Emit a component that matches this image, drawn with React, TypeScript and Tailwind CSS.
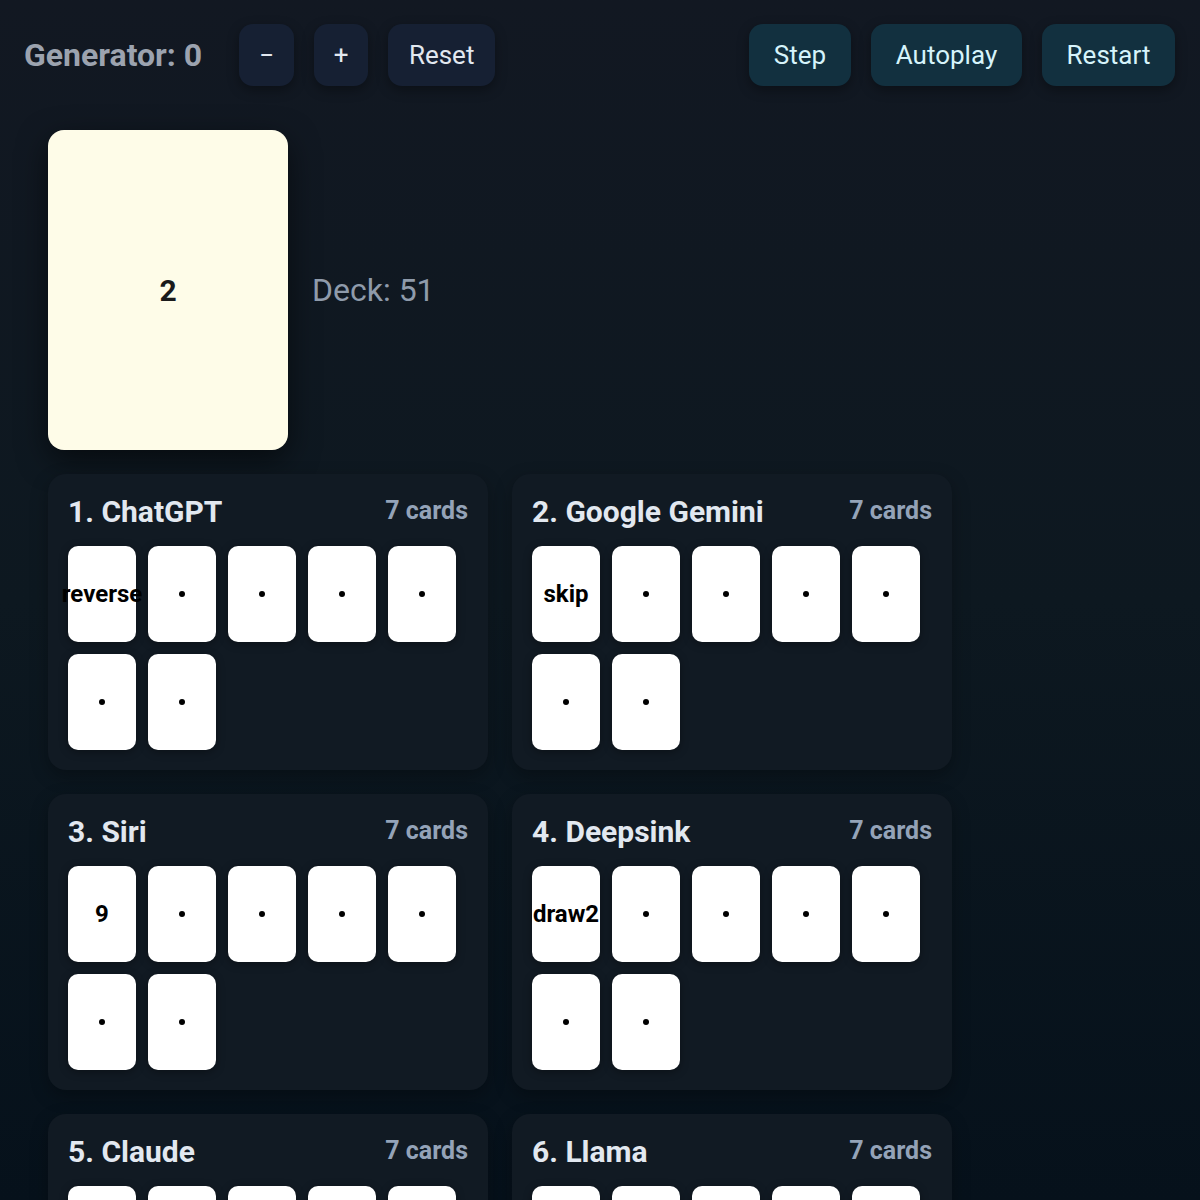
import React from 'react';

type Player = {
  name: string;
  hand: string[];
};

const players: Player[] = [
  { name: 'ChatGPT', hand: ['reverse', '•', '•', '•', '•', '•', '•'] },
  { name: 'Google Gemini', hand: ['skip', '•', '•', '•', '•', '•', '•'] },
  { name: 'Siri', hand: ['9', '•', '•', '•', '•', '•', '•'] },
  { name: 'Deepsink', hand: ['draw2', '•', '•', '•', '•', '•', '•'] },
  { name: 'Claude', hand: ['•', '•', '•', '•', '•', '•', '•'] },
  { name: 'Llama', hand: ['•', '•', '•', '•', '•', '•', '•'] },
];

const font = { fontFamily: 'Roboto, "Noto Sans", sans-serif' };

const ghostBtn =
  'h-[62px] rounded-[14px] bg-[#162033] text-[#e2e8f0] text-[26px] shadow-[0_4px_12px_rgba(0,0,0,0.35)] flex items-center justify-center';
const actionBtn =
  'h-[62px] rounded-[14px] bg-[#12303f] text-[#d6f4fb] text-[26px] shadow-[0_4px_12px_rgba(0,0,0,0.35)] flex items-center justify-center';

const MiniCard: React.FC<{ label: string }> = ({ label }) => (
  <div className="w-[68px] h-[96px] rounded-[10px] bg-white flex items-center justify-center overflow-visible shadow-[0_2px_8px_rgba(0,0,0,0.35)]">
    {label === '•' ? (
      <span className="w-[6px] h-[6px] rounded-full bg-black" />
    ) : (
      <span className="text-[24px] font-bold text-black whitespace-nowrap">{label}</span>
    )}
  </div>
);

const PlayerPanel: React.FC<{ index: number; player: Player }> = ({ index, player }) => (
  <div className="w-[440px] rounded-[18px] bg-[#111a23] p-5 shadow-[0_6px_18px_rgba(0,0,0,0.3)]">
    <div className="flex items-center justify-between h-[36px] mb-4">
      <h2 className="text-[30px] font-bold text-[#e2e8f0] leading-none">
        {index + 1}. {player.name}
      </h2>
      <span className="text-[25px] font-bold text-[#94a3b8] leading-none -mt-[4px]">
        {player.hand.length} cards
      </span>
    </div>
    <div className="flex flex-wrap gap-3">
      {player.hand.map((c, i) => (
        <MiniCard key={i} label={c} />
      ))}
    </div>
  </div>
);

export default function App() {
  return (
    <div
      className="h-[1200px] w-full bg-gradient-to-b from-[#121822] via-[#0d1820] to-[#06111b] overflow-hidden"
      style={font}
    >
      {/* top bar */}
      <div className="flex items-center justify-between pl-6 pr-[25px] pt-6">
        <div className="flex items-center">
          <span className="text-[32px] font-bold text-[#9ca3af] mr-[37px]">Generator: 0</span>
          <div className="flex gap-5">
            <button className={`${ghostBtn} w-[55px]`}>−</button>
            <button className={`${ghostBtn} w-[54px]`}>+</button>
            <button className={`${ghostBtn} w-[107px]`}>Reset</button>
          </div>
        </div>
        <div className="flex gap-5">
          <button className={`${actionBtn} w-[102px]`}>Step</button>
          <button className={`${actionBtn} w-[151px]`}>Autoplay</button>
          <button className={`${actionBtn} w-[133px]`}>Restart</button>
        </div>
      </div>

      <div className="pl-12 pt-[44px]">
        {/* discard pile + deck */}
        <div className="flex items-center gap-6 mb-6">
          <div className="w-[240px] h-[320px] rounded-[16px] bg-[#fefce8] flex items-center justify-center shadow-[0_10px_30px_rgba(0,0,0,0.55)]">
            <span className="text-[30px] font-bold text-[#1a1a1a]">2</span>
          </div>
          <span className="text-[32px] text-[#8f9bab]">Deck: 51</span>
        </div>

        {/* players */}
        <div className="grid grid-cols-[440px_440px] gap-6">
          {players.map((p, i) => (
            <PlayerPanel key={p.name} index={i} player={p} />
          ))}
        </div>
      </div>
    </div>
  );
}
